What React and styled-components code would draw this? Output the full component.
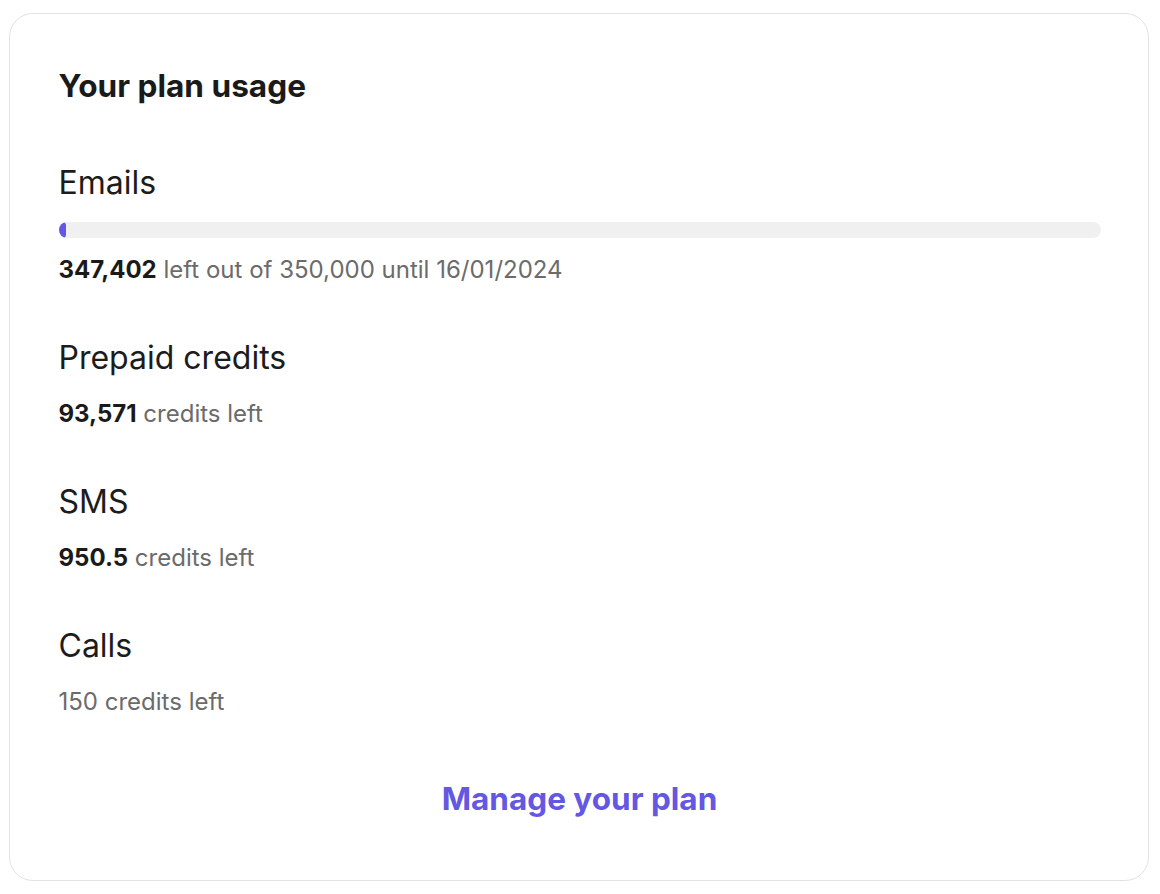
import { styled, createGlobalStyle } from "styled-components";

const GlobalStyle = createGlobalStyle`
  * {
    box-sizing: border-box;
  }

  body {
    margin: 0;
    background-color: #fff;
    font-family: Inter, "Noto Sans", sans-serif;
    color: #1a1a1a;
  }
`;

const usage = [
  {
    name: "Emails",
    used: 2598,
    total: 350000,
    left: "347,402",
    note: "left out of 350,000 until 16/01/2024",
    showBar: true,
  },
  { name: "Prepaid credits", left: "93,571", note: "credits left" },
  { name: "SMS", left: "950.5", note: "credits left" },
  { name: "Calls", note: "150 credits left" },
];

const App = () => {
  return (
    <>
      <GlobalStyle />
      <Page>
        <Card>
          <Title>Your plan usage</Title>

          <SectionList>
            {usage.map((item) => (
              <Section key={item.name}>
                <SectionName>{item.name}</SectionName>
                {item.showBar && (
                  <BarTrack>
                    <BarFill
                      style={{ width: `${(item.used / item.total) * 100}%` }}
                    />
                  </BarTrack>
                )}
                <SectionNote $spaced={item.showBar}>
                  {item.left && <strong>{item.left}</strong>}
                  {item.left ? ` ${item.note}` : item.note}
                </SectionNote>
              </Section>
            ))}
          </SectionList>

          <ManageLink href="#">Manage your plan</ManageLink>
        </Card>
      </Page>
    </>
  );
};

const Page = styled.div`
  padding: 13px 11px 14px 9px;
`;

const Card = styled.div`
  width: 1140px;
  height: 868px;
  border: 1.5px solid #e2e2e2;
  border-radius: 24px;
  padding: 54px 47.5px 0 48.5px;
  display: flex;
  flex-direction: column;
`;

const Title = styled.h2`
  margin: 0;
  font-size: 31.6px;
  line-height: 36px;
  font-weight: 700;
  color: #1a1a1a;
`;

const SectionList = styled.div`
  margin-top: 59px;
  display: flex;
  flex-direction: column;
  gap: 53px;
`;

const Section = styled.div`
  display: flex;
  flex-direction: column;
`;

const SectionName = styled.h3`
  margin: 0;
  font-size: 32px;
  line-height: 40px;
  font-weight: 400;
  color: #1c1c1c;
`;

const BarTrack = styled.div`
  margin-top: 19px;
  height: 16px;
  width: 100%;
  border-radius: 8px;
  background-color: #f0f0f0;
  overflow: hidden;
`;

const BarFill = styled.div`
  height: 100%;
  border-radius: 8px;
  background-color: #6457e2;
`;

const SectionNote = styled.p`
  margin: ${({ $spaced }) => ($spaced ? "17px" : "21px")} 0 0;
  font-size: 24px;
  line-height: 30px;
  color: #6b6b6b;

  strong {
    font-weight: 700;
    color: #1a1a1a;
  }
`;

const ManageLink = styled.a`
  margin-top: 62px;
  align-self: center;
  font-size: 31.5px;
  line-height: 40px;
  font-weight: 700;
  color: #6457e2;
  text-decoration: none;
`;

export default App;
